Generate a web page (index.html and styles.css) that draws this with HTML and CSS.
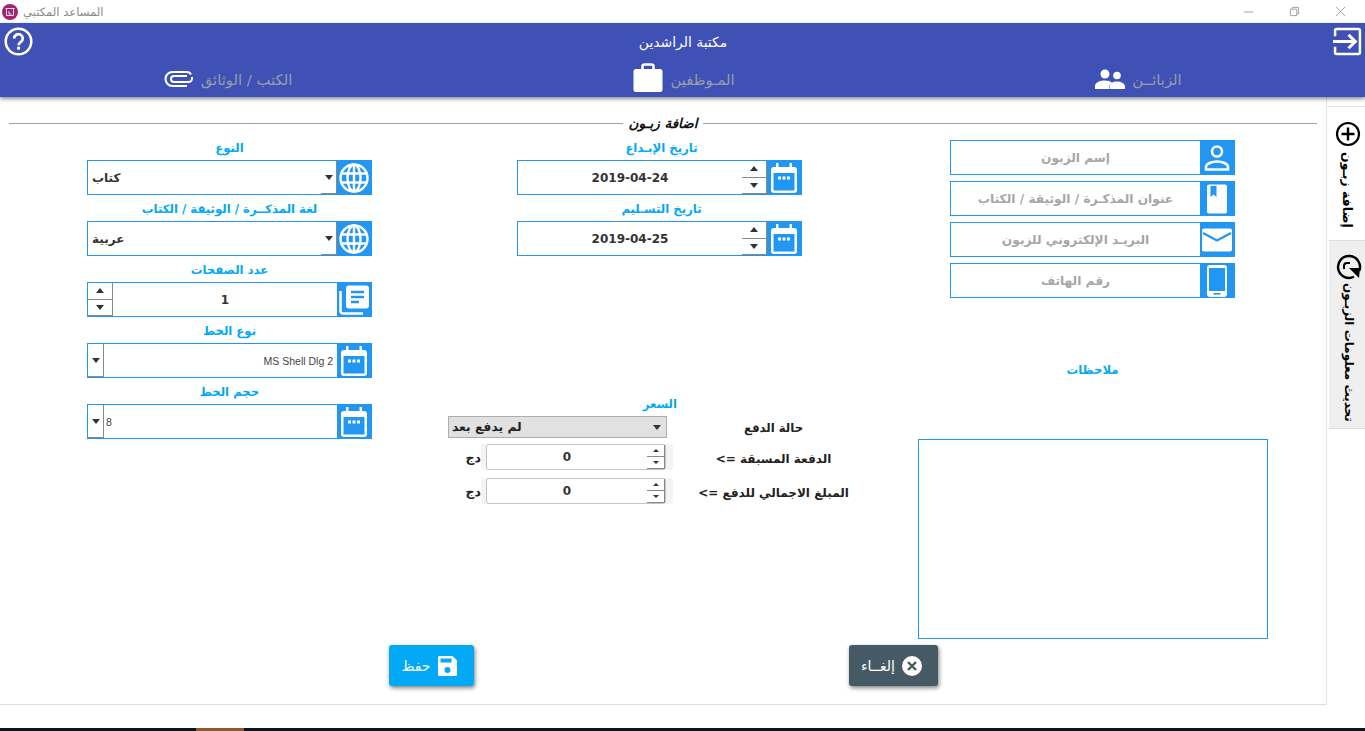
FILE: index.html
```html
<!DOCTYPE html>
<html lang="ar">
<head>
    <meta charset="UTF-8">
    <title>المساعد المكتبي</title>
    <link rel="stylesheet" href="styles.css">
</head>
<body>
    <!-- شريط النافذة -->
    <div class="titlebar">
        <svg class="app-logo" viewBox="0 0 16 16"><circle cx="8" cy="8" r="8" fill="#a2246f"/><path d="M3.5 4.5h9M4.5 4.5v7h7v-7M7 7v3h2.5" fill="none" stroke="#f3dbe8" stroke-width="1"/></svg>
        <span class="app-name" dir="rtl">المساعد المكتبي</span>
        <div class="win-buttons">
            <svg viewBox="0 0 12 12"><path d="M1 6.5h10" stroke="#999" fill="none"/></svg>
            <svg viewBox="0 0 12 12"><path d="M1.5 3.5h7v7h-7zM3.5 3.5v-2h7v7h-2" stroke="#999" fill="none"/></svg>
            <svg viewBox="0 0 12 12"><path d="M1 1l10 10M11 1L1 11" stroke="#999" fill="none"/></svg>
        </div>
    </div>

    <div class="header">
        <div class="header-top">
            <svg class="top-icon" viewBox="0 0 30 30"><circle cx="15" cy="15" r="13.2" fill="none" stroke="#fff" stroke-width="2.6"/><path d="M10.6 11.8a4.4 4.4 0 1 1 6.9 3.6c-1.6 1.1-2.4 1.9-2.4 3.6" fill="none" stroke="#fff" stroke-width="2.8"/><rect x="13.6" y="20.4" width="3" height="3" fill="#fff"/></svg>
            <span class="shop-name" dir="rtl">مكتبة الراشدين</span>
            <svg class="top-icon" viewBox="0 0 28 28"><path d="M2 9V3.5A1.5 1.5 0 0 1 3.5 2h21A1.5 1.5 0 0 1 26 3.5v21a1.5 1.5 0 0 1-1.5 1.5h-21A1.5 1.5 0 0 1 2 24.5V19" fill="none" stroke="#fff" stroke-width="2.4"/><path d="M0 14h21M15 7.5l6.5 6.5-6.5 6.500" fill="none" stroke="#fff" stroke-width="3"/></svg>
        </div>
        <div class="tabs">
            <div class="tab">
                <svg class="clip" viewBox="0 0 30 18"><path d="M27 4.5C26 2.5 25 2 23 2H8.500a7 7 0 0 0 0 14H23" fill="none" stroke="#fff" stroke-width="2"/><path d="M23 6H10a3 3 0 0 0 0 6h14.5a3.5 3.5 0 0 0 3.500-3.500V7" fill="none" stroke="#fff" stroke-width="2"/></svg>
                <span dir="rtl">الكتب / الوثائق</span>
            </div>
            <div class="tab">
                <svg class="case" viewBox="0 0 30 30"><path d="M9.5 6V3.5A2 2 0 0 1 11.5 1.5h7a2 2 0 0 1 2 2V6" fill="none" stroke="#fff" stroke-width="2.6"/><rect x="0.5" y="6" width="29" height="23" rx="2.5" fill="#fff"/></svg>
                <span dir="rtl">المـوظفين</span>
            </div>
            <div class="tab">
                <svg class="people" viewBox="0 0 30 20"><circle cx="10" cy="5" r="4.5" fill="#fff"/><circle cx="22" cy="6.5" r="3.8" fill="#fff"/><path d="M0 20v-3c0-3.5 5-5.500 10-5.500 3 0 5.500.7 7 2-1.500 1-2 2.500-2 4v2.500zM14.500 20h15.500v-2.500c0-3-4-5-8-5s-7.500 2-7.500 5z" fill="#fff"/></svg>
                <span dir="rtl">الزبائــن</span>
            </div>
        </div>
    </div>

    <div class="main">
        <div class="content">
            <div class="section-title"><span dir="rtl">اضافة زبـون</span></div>

            <div class="columns">
                <!-- العمود الايسر -->
                <div class="col col-left">
                    <div class="labeled">
                        <label dir="rtl">النوع</label>
                        <div class="field">
                            <div class="box"><span class="val val-combo">كتاب</span><span class="drop drop-end"><i class="arrow-down"></i></span></div>
                            <span class="ico"><svg viewBox="0 0 30 30"><use href="#globe"/></svg></span>
                        </div>
                    </div>
                    <div class="labeled">
                        <label dir="rtl">لغة المذكــرة / الوثيقة / الكتاب</label>
                        <div class="field">
                            <div class="box"><span class="val val-combo">عربية</span><span class="drop drop-end"><i class="arrow-down"></i></span></div>
                            <span class="ico"><svg viewBox="0 0 30 30"><use href="#globe"/></svg></span>
                        </div>
                    </div>
                    <div class="labeled">
                        <label dir="rtl">عدد الصفحات</label>
                        <div class="field">
                            <div class="box">
                                <span class="spin spin-left"><b><i class="arrow-up"></i></b><b><i class="arrow-down"></i></b></span>
                                <span class="val val-center">1</span>
                            </div>
                            <span class="ico"><svg viewBox="0 0 30 30"><path d="M7 3.500a3 3 0 0 1 3-3h17a3 3 0 0 1 3 3v17a3 3 0 0 1-3 3H10a3 3 0 0 1-3-3z" fill="#fff"/><path d="M12 7h13M12 12h13M12 17h8" stroke="#2196f3" stroke-width="2.4"/><path d="M1.5 6v20a2.5 2.5 0 0 0 2.5 2.5h20" fill="none" stroke="#fff" stroke-width="2.6"/></svg></span>
                        </div>
                    </div>
                    <div class="labeled">
                        <label dir="rtl">نوع الخط</label>
                        <div class="field">
                            <div class="box">
                                <span class="drop drop-small"><i class="arrow-down"></i></span>
                                <span class="val val-font">MS Shell Dlg 2</span>
                            </div>
                            <span class="ico"><svg viewBox="0 0 30 30"><use href="#calendar"/></svg></span>
                        </div>
                    </div>
                    <div class="labeled">
                        <label dir="rtl">حجم الخط</label>
                        <div class="field">
                            <div class="box">
                                <span class="drop drop-small"><i class="arrow-down"></i></span>
                                <span class="val val-size">8</span>
                            </div>
                            <span class="ico"><svg viewBox="0 0 30 30"><use href="#calendar"/></svg></span>
                        </div>
                    </div>
                </div>

                <!-- العمود الاوسط -->
                <div class="col col-mid">
                    <div class="dates">
                        <div class="labeled">
                            <label class="label-date" dir="rtl">تاريخ الإبـداع</label>
                            <div class="field">
                                <div class="box">
                                    <span class="val val-date">2019-04-24</span>
                                    <span class="spin spin-right"><b><i class="arrow-up"></i></b><b><i class="arrow-down"></i></b></span>
                                </div>
                                <span class="ico"><svg viewBox="0 0 30 30"><use href="#calendar"/></svg></span>
                            </div>
                        </div>
                        <div class="labeled">
                            <label class="label-date" dir="rtl">تاريخ التسـليم</label>
                            <div class="field">
                                <div class="box">
                                    <span class="val val-date">2019-04-25</span>
                                    <span class="spin spin-right"><b><i class="arrow-up"></i></b><b><i class="arrow-down"></i></b></span>
                                </div>
                                <span class="ico"><svg viewBox="0 0 30 30"><use href="#calendar"/></svg></span>
                            </div>
                        </div>
                    </div>

                    <div class="price">
                        <div class="price-label" dir="rtl">السعر</div>
                        <div class="price-row price-row-first">
                            <div class="price-select"><span>لم يدفع بعد</span><i class="arrow-down"></i></div>
                            <div class="price-name" dir="rtl">حالة الدفع</div>
                        </div>
                        <div class="price-row">
                            <div class="price-wrap">
                                <span class="cur" dir="rtl">دج</span>
                                <div class="amount"><span>0</span><span class="mini-spin"><b><i class="arrow-up small"></i></b><b><i class="arrow-down small"></i></b></span></div>
                            </div>
                            <div class="price-name" dir="rtl">الدفعة المسبقة =&gt;</div>
                        </div>
                        <div class="price-row">
                            <div class="price-wrap">
                                <span class="cur" dir="rtl">دج</span>
                                <div class="amount"><span>0</span><span class="mini-spin"><b><i class="arrow-up small"></i></b><b><i class="arrow-down small"></i></b></span></div>
                            </div>
                            <div class="price-name" dir="rtl">المبلغ الاجمالي للدفع =&gt;</div>
                        </div>
                    </div>
                </div>

                <!-- العمود الايمن -->
                <div class="col col-right">
                    <div class="stack">
                        <div class="field">
                            <div class="box hint" dir="rtl">إسم الزبون</div>
                            <span class="ico"><svg viewBox="0 0 30 30"><circle cx="15" cy="8.5" r="5" fill="none" stroke="#fff" stroke-width="2.6"/><path d="M4 26.500v-2.500c0-3.500 6-5.500 11-5.500s11 2 11 5.500v2.500z" fill="none" stroke="#fff" stroke-width="2.6"/></svg></span>
                        </div>
                        <div class="field">
                            <div class="box hint" dir="rtl">عنوان المذكـرة / الوثيقة / الكتاب</div>
                            <span class="ico"><svg viewBox="0 0 30 30"><path d="M5 2.5a2 2 0 0 1 2-2h16a2 2 0 0 1 2 2v25a2 2 0 0 1-2 2H7a2 2 0 0 1-2-2z" fill="#fff"/><path d="M8.500 2h6v11l-3-2.500-3 2.500z" fill="#2196f3"/></svg></span>
                        </div>
                        <div class="field">
                            <div class="box hint" dir="rtl">البريـد الإلكتروني للزبون</div>
                            <span class="ico ico-wide"><svg viewBox="0 0 30 24"><rect y="0.5" width="30" height="23" rx="2" fill="#fff"/><path d="M1 5l14 7.500L29 5" fill="none" stroke="#2196f3" stroke-width="2.4"/></svg></span>
                        </div>
                        <div class="field">
                            <div class="box hint" dir="rtl">رقم الهاتف</div>
                            <span class="ico"><svg class="phone" viewBox="0 0 20 32"><rect width="20" height="32" rx="3" fill="#fff"/><rect x="2" y="3" width="16" height="23" fill="#2196f3"/><rect x="6.500" y="28" width="7" height="1.600" fill="#2196f3"/></svg></span>
                        </div>
                    </div>
                    <div class="notes-label" dir="rtl">ملاحظات</div>
                    <div class="notes"></div>
                </div>
            </div>

            <div class="actions">
                <div class="btn btn-save">
                    <span dir="rtl">حفظ</span>
                    <svg viewBox="0 0 20 20"><path d="M1.500 0h13L19 4.500V18.500a1.500 1.500 0 0 1-1.500 1.500h-16A1.500 1.500 0 0 1 0 18.500V1.500A1.500 1.500 0 0 1 1.500 0z" fill="#fff"/><rect x="2.5" y="2.5" width="11" height="4" fill="#03a9f4"/><circle cx="9.5" cy="14" r="3" fill="#03a9f4"/></svg>
                </div>
                <div class="btn btn-cancel">
                    <span dir="rtl">إلغــاء</span>
                    <svg viewBox="0 0 20 20"><circle cx="10" cy="10" r="10" fill="#fff"/><path d="M6 6l8 8M14 6l-8 8" stroke="#455a64" stroke-width="2.4"/></svg>
                </div>
            </div>
        </div>

        <!-- التبويبات الجانبية -->
        <div class="side">
            <div class="side-tab side-active">
                <svg viewBox="0 0 26 26"><circle cx="13" cy="13" r="11" fill="none" stroke="#000" stroke-width="2.2"/><path d="M13 6.500v13M6.500 13h13" stroke="#000" stroke-width="2.4"/></svg>
                <span dir="rtl">إضافة زبـون</span>
            </div>
            <div class="side-tab side-other">
                <svg viewBox="0 0 26 26"><path d="M21 20.500A11 11 0 1 1 24 13" fill="none" stroke="#000" stroke-width="2.4" transform="rotate(20 13 13)"/><path d="M8 15v-3a3 3 0 0 1 3-3h3" fill="none" stroke="#000" stroke-width="2"/><path d="M13 14l11 0-1 10z" fill="#000"/></svg>
                <span dir="rtl">تحديث معلومات الزبـون</span>
            </div>
        </div>
    </div>

    <div class="footer-space"></div>
    <div class="taskbar"><span class="task-item"></span></div>

    <svg class="defs" width="0" height="0">
        <symbol id="globe" viewBox="0 0 30 30">
            <circle cx="15" cy="15" r="13.5" fill="none" stroke="#fff" stroke-width="2.4"/>
            <ellipse cx="15" cy="15" rx="6.5" ry="13.5" fill="none" stroke="#fff" stroke-width="2.4"/>
            <path d="M2.5 10.500h25M2.500 19.500h25M15 1.500v27" stroke="#fff" stroke-width="2.4"/>
        </symbol>
        <symbol id="calendar" viewBox="0 0 30 30">
            <path d="M7 0h2.500v4h11V0H23v4h2a3 3 0 0 1 3 3v20a3 3 0 0 1-3 3H5a3 3 0 0 1-3-3V7a3 3 0 0 1 3-3h2z" fill="#fff"/>
            <rect x="4.5" y="10" width="21" height="17.5" fill="#2196f3"/>
            <path d="M9 13.500h3v3H9zM13.500 13.500h3v3h-3zM18 13.500h3v3h-3z" fill="#fff"/>
        </symbol>
    </svg>
</body>
</html>
```

FILE: styles.css
```css
* {
    box-sizing: border-box;
}

body {
    margin: 0;
    height: 731px;
    overflow: hidden;
    display: flex;
    flex-direction: column;
    background-color: #fff;
    font-family: "DejaVu Sans", sans-serif;
    color: #333;
}

.defs {
    position: absolute;
}

/* titlebar */
.titlebar {
    height: 23px;
    flex: none;
    display: flex;
    align-items: center;
    padding-left: 2px;
    background-color: #fff;
}

.app-logo {
    width: 16px;
    height: 16px;
}

.app-name {
    margin-left: 5px;
    font-size: 11.6px;
    color: #8a8a8a;
}

.win-buttons {
    margin-left: auto;
    display: flex;
    gap: 35px;
    padding-right: 19px;
}

.win-buttons svg {
    width: 11px;
    height: 11px;
    display: block;
}

/* header */
.header {
    height: 74px;
    flex: none;
    background-color: #3f51b5;
    box-shadow: 0 2px 4px rgba(0, 0, 0, 0.45);
    position: relative;
    z-index: 2;
}

.header-top {
    height: 41px;
    display: flex;
    align-items: flex-start;
    justify-content: space-between;
    padding: 4px 3px 0 4px;
}

.top-icon {
    width: 29px;
    height: 29px;
}

.shop-name {
    color: #fff;
    font-size: 13.9px;
    margin-top: 7px;
}

.tabs {
    display: grid;
    grid-template-columns: 456px 456px 453px;
}

.tab {
    display: flex;
    justify-content: center;
    align-items: center;
    gap: 7px;
    height: 30px;
    color: #9a9cad;
    font-size: 14.8px;
}

.clip {
    width: 30px;
    height: 18px;
}

.case {
    width: 30px;
    height: 30px;
    margin-top: -2px;
}

.people {
    width: 30px;
    height: 20px;
}

/* main */
.main {
    height: 608px;
    flex: none;
    display: flex;
}

.content {
    width: 1327px;
    flex: none;
    padding: 10px 9px 0 9px;
    border-right: 1px solid #e3e3e3;
    border-bottom: 1px solid #ddd;
}

.section-title {
    height: 27px;
    display: flex;
    justify-content: center;
    align-items: flex-start;
    background: linear-gradient(#a0a0a0, #a0a0a0) 0 16px / 100% 1px no-repeat;
}

.section-title span {
    background-color: #fff;
    height: 20px;
    padding: 0 6px;
    font-size: 13.5px;
    font-weight: bold;
    font-style: italic;
    color: #111;
    line-height: 32px;
}

.columns {
    display: flex;
    height: 511px;
    padding-left: 78px;
}

.col {
    width: 285px;
    flex: none;
}

.col-mid {
    margin-left: 145px;
}

.col-right {
    margin-left: 148px;
    margin-top: 6px;
}

label,
.price-label,
.notes-label {
    display: block;
    text-align: center;
    color: #03a9f4;
    font-size: 11.7px;
    font-weight: bold;
}

.labeled label {
    height: 26px;
    line-height: 28px;
}

.labeled .label-date {
    padding-left: 4px;
}

/* fields */
.field {
    height: 35px;
    display: flex;
    background-color: #2196f3;
    border: 1px solid #2196f3;
}

.box {
    flex: 1;
    min-width: 0;
    display: flex;
    align-items: stretch;
    background-color: #fff;
    font-size: 12px;
    font-weight: bold;
}

.hint {
    align-items: center;
    justify-content: center;
    color: #a6a6a6;
    font-size: 12.2px;
}

.ico {
    width: 34px;
    flex: none;
    display: flex;
    align-items: center;
    justify-content: center;
}

.ico svg {
    width: 30px;
    height: 30px;
    display: block;
}

.ico .phone {
    width: 20px;
    height: 32px;
}

.ico-wide svg {
    height: 24px;
}

.val {
    flex: 1;
    display: flex;
    align-items: center;
    min-width: 0;
}

.val-combo {
    padding-left: 4px;
}

.val-center {
    justify-content: center;
}

.val-font {
    justify-content: flex-end;
    padding-right: 4px;
    font-family: "Liberation Sans", sans-serif;
    font-weight: normal;
    font-size: 10.5px;
    color: #444;
}

.val-size {
    padding-left: 2px;
    font-family: "Liberation Sans", sans-serif;
    font-weight: normal;
    font-size: 10.5px;
    color: #444;
}

.val-date {
    justify-content: center;
}

/* spin + combo buttons */
.drop {
    flex: none;
    display: flex;
    align-items: center;
    justify-content: center;
    background-color: #fff;
    border-right: 1px solid #888;
    border-bottom: 1px solid #888;
}

.drop-end {
    width: 16px;
}

.drop-small {
    width: 16px;
}

.spin {
    flex: none;
    width: 25px;
    display: flex;
    flex-direction: column;
    border-right: 1px solid #888;
}

.spin b {
    flex: 1;
    display: flex;
    align-items: center;
    justify-content: center;
    border-bottom: 1px solid #888;
}

.arrow-down,
.arrow-up {
    width: 0;
    height: 0;
    border-left: 4px solid transparent;
    border-right: 4px solid transparent;
}

.arrow-down {
    border-top: 5px solid #333;
}

.arrow-up {
    border-bottom: 5px solid #333;
}

.arrow-down.small,
.arrow-up.small {
    border-left-width: 3px;
    border-right-width: 3px;
}

.arrow-down.small {
    border-top-width: 3px;
}

.arrow-up.small {
    border-bottom-width: 3px;
}

/* price block */
.dates {
    height: 218px;
}

.price {
    margin: 47px 0 0 -69px;
    width: 432px;
}

.price-label {
    width: 229px;
    text-align: right;
    height: 15px;
    line-height: 10px;
}

.price-row {
    display: flex;
    align-items: center;
    height: 34px;
    font-size: 12px;
    font-weight: bold;
    color: #222;
}

.price-row-first {
    height: 26px;
}

.price-select {
    width: 219px;
    height: 22px;
    display: flex;
    align-items: center;
    justify-content: space-between;
    padding: 0 5px 0 3px;
    background-color: #e1e1e1;
    border: 1px solid #adadad;
    font-size: 12.3px;
}

.price-wrap {
    width: 218px;
    display: flex;
    align-items: center;
    justify-content: flex-end;
    gap: 5px;
    margin-right: 1px;
}

.cur {
    font-size: 12.5px;
}

.amount {
    width: 180px;
    height: 26px;
    display: flex;
    align-items: center;
    border: 1px solid #c4c4c4;
    border-radius: 3px;
    background-color: #fff;
    box-shadow: -5px 0 0 #f4f4f4, 7px 0 0 #f4f4f4;
    font-size: 12px;
    color: #333;
}

.amount > span:first-child {
    flex: 1;
    text-align: center;
}

.mini-spin {
    width: 18px;
    height: 24px;
    display: flex;
    flex-direction: column;
    border-right: 1px solid #888;
}

.mini-spin b {
    flex: 1;
    display: flex;
    align-items: center;
    justify-content: center;
    border-bottom: 1px solid #888;
}

.price-name {
    flex: 1;
    text-align: center;
    padding-top: 3px;
}

.price-row-first .price-name {
    font-size: 11.7px;
    padding-top: 2px;
}

/* right column */
.stack {
    display: flex;
    flex-direction: column;
    gap: 6px;
}

.notes-label {
    margin-top: 65px;
    height: 18px;
}

.notes {
    width: 350px;
    height: 200px;
    margin: 58px 0 0 -32px;
    border: 1px solid #2196f3;
}

/* bottom buttons */
.actions {
    display: flex;
    padding-left: 380px;
    gap: 375px;
}

.btn {
    height: 41px;
    display: flex;
    align-items: center;
    justify-content: center;
    gap: 7px;
    padding-right: 4px;
    border-radius: 3px;
    color: #fff;
    font-size: 14px;
    box-shadow: 1px 2px 4px rgba(0, 0, 0, 0.5);
}

.btn svg {
    width: 20px;
    height: 20px;
}

.btn-save {
    width: 85px;
    background-color: #03a9f4;
}

.btn-cancel {
    width: 89px;
    background-color: #455a64;
}

/* side tabs */
.side {
    width: 38px;
    flex: none;
    margin-top: 9px;
    display: flex;
    flex-direction: column;
}

.side-tab {
    display: flex;
    flex-direction: column;
    align-items: center;
    padding: 14px 0 0 3px;
    font-size: 12px;
    font-weight: bold;
    color: #000;
}

.side-tab svg {
    width: 26px;
    height: 26px;
    flex: none;
}

.side-tab span {
    writing-mode: vertical-rl;
    margin-top: 5px;
    white-space: nowrap;
}

.side-active {
    height: 134px;
    border-top: 1px solid #e3e3e3;
    font-size: 12.5px;
}

.side-other {
    height: 189px;
    padding-top: 13px;
    background-color: #efefef;
    border-top: 1px solid #ddd;
    border-bottom: 1px solid #ddd;
    margin-left: 2px;
}

.side-other span {
    margin-top: 3px;
}

/* bottom */
.footer-space {
    flex: 1;
}

.taskbar {
    height: 3px;
    flex: none;
    background-color: #0b1418;
}

.task-item {
    display: block;
    width: 48px;
    height: 3px;
    margin-left: 196px;
    background-color: #8a5a2c;
}
```
